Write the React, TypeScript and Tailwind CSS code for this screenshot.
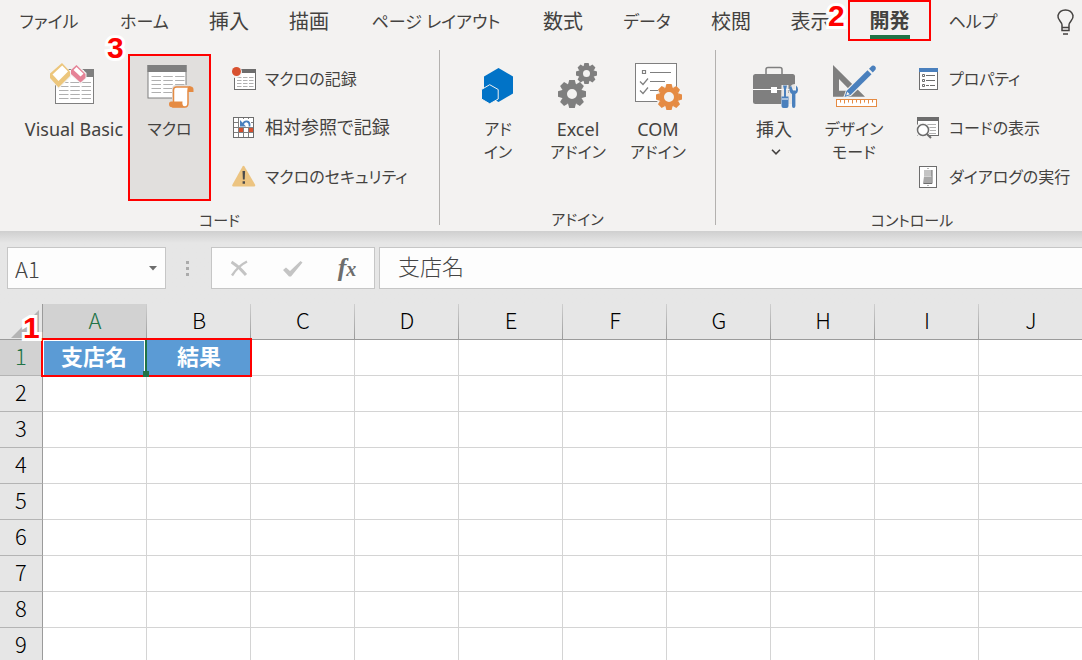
import type { ReactNode } from "react";

const TABS = [
	{ label: "ファイル", width: "w-[98px]", kana: true },
	{ label: "ホーム", width: "w-[93px]", kana: true },
	{ label: "挿入", width: "w-[76px]" },
	{ label: "描画", width: "w-[84px]" },
	{ label: "ページ レイアウト", width: "w-[170px]", kana: true },
	{ label: "数式", width: "w-[84px]" },
	{ label: "データ", width: "w-[84px]", kana: true },
	{ label: "校閲", width: "w-[84px]" },
	{ label: "表示", width: "w-[75px]" },
	{ label: "開発", width: "w-[83px]", active: true },
	{ label: "ヘルプ", width: "w-[84px]", kana: true },
];

const COLUMNS = ["A", "B", "C", "D", "E", "F", "G", "H", "I", "J"];
const ROWS = [1, 2, 3, 4, 5, 6, 7, 8, 9];

function Gear({
	cx,
	cy,
	r,
	hole,
	fill,
}: {
	cx: number;
	cy: number;
	r: number;
	hole: number;
	fill: string;
}) {
	const ring = (r * 0.76 + hole) / 2;
	const tooth = r * 0.2;
	return (
		<g transform={`translate(${cx} ${cy})`} fill={fill}>
			<circle
				r={ring}
				fill="none"
				stroke={fill}
				strokeWidth={r * 0.76 - hole}
			/>
			{[0, 45, 90, 135, 180, 225, 270, 315].map((a) => (
				<path
					key={a}
					transform={`rotate(${a})`}
					d={`M${-tooth * 1.4} ${-r * 0.7}L${-tooth} ${-r}H${tooth}L${tooth * 1.4} ${-r * 0.7}Z`}
				/>
			))}
		</g>
	);
}

function LargeIcon({ children }: { children: ReactNode }) {
	return (
		<svg viewBox="0 0 48 48" className="size-12 shrink-0" aria-hidden="true">
			{children}
		</svg>
	);
}

function SmallIcon({ children }: { children: ReactNode }) {
	return (
		<svg viewBox="0 0 24 24" className="size-6 shrink-0" aria-hidden="true">
			{children}
		</svg>
	);
}

function VisualBasicIcon() {
	return (
		<LargeIcon>
			<rect x="5.5" y="7.5" width="38" height="34" fill="#fff" stroke="#7f7f7f" />
			<path d="M34 7h10v8H34z" fill="#7f7f7f" />
			<path
				d="M9 20.5h32M9 24.5h32M9 28.5h32M9 32.5h32M9 36.5h32"
				stroke="#b0b0b0"
				strokeDasharray="9.5 1.8"
			/>
			<path d="M12 0.5L21 10v5L8.500 27L-0.500 16v-4.500z" fill="#f3f2f1" />
			<path d="M12 1L20 9.500V14L8.500 25.500L0 16V11.500z" fill="#ecc67c" />
			<path d="M12.200 3.500L18 9.500L8.500 19L2.500 12.500z" fill="#fff" />
			<path d="M27 2L36.500 11v5L31 22L20.500 13V8z" fill="#f3f2f1" />
			<path d="M26.500 3L35.500 12V16L30.500 20.500L21 12V8z" fill="#e58397" />
			<path d="M26.500 5L33.500 11.800L30.500 14.500L23.500 8z" fill="#fff" />
		</LargeIcon>
	);
}

function MacroIcon() {
	return (
		<LargeIcon>
			<rect x="2" y="3.500" width="38" height="32.500" fill="#fff" stroke="#7f7f7f" />
			<path d="M1.500 3h39v7h-39z" fill="#7f7f7f" />
			<path
				d="M5.500 14.500h33M5.500 18.500h33M5.500 22.500h33M5.500 26.500h33M5.500 30.500h33"
				stroke="#b0b0b0"
				strokeDasharray="9.500 2.300"
			/>
			<path d="M26 39V27q0-4 4-4h15q4 0 4 4v4h-4v9q0 7-6 7H25q-3-1-3-4t4-4z" fill="#e1dfdd" />
			<path d="M27.500 40V28q0-3 3-3H43q-1 1-1 4v12q0 4-3 4H27z" fill="#fff" stroke="#e58b43" strokeWidth="1.500" />
			<path d="M43 24.300q4.500 0 4.500 3.200V30H42v-2.500q0-2 1-3.200z" fill="#e58b43" />
			<path d="M25.500 39.500h11q-.8 4 2.500 5.800H26q-3 0-3-3t2.500-2.800z" fill="#e58b43" />
		</LargeIcon>
	);
}

function AddInIcon() {
	return (
		<LargeIcon>
			<path d="M24.500 6L39 14.500v17L24.500 40L10 31.500v-17z" fill="#0173c7" />
			<path
				d="M15.700 22.700L24.200 27.500v9.500l-8.500 4.800L7.500 37v-9.500z"
				fill="#0173c7"
				stroke="#f3f2f1"
				strokeWidth="1"
			/>
		</LargeIcon>
	);
}

function ExcelAddInIcon() {
	return (
		<LargeIcon>
			<Gear cx={32.5} cy={11.5} r={10.5} hole={3.5} fill="#7f7f7f" />
			<Gear cx={18} cy={32} r={14} hole={5} fill="#7f7f7f" />
		</LargeIcon>
	);
}

function ComAddInIcon() {
	return (
		<LargeIcon>
			<rect x="1.500" y="1.500" width="41" height="38" fill="#fff" stroke="#7f7f7f" />
			<path
				d="M8.500 8.500h3v3h-3zM16 10.500h21M16 19.500h15M16 28.500h8M6 19.500l3 3 5-6M6 28.500l3 3 5-6"
				fill="none"
				stroke="#7f7f7f"
				strokeWidth="1.200"
			/>
			<circle cx="35" cy="35" r="12.500" fill="#f3f2f1" />
			<Gear cx={35} cy={35} r={13} hole={5} fill="#e58b43" />
		</LargeIcon>
	);
}

function ToolboxIcon() {
	return (
		<LargeIcon>
			<path d="M16 12V7.500q0-2 2-2h12q2 0 2 2V12" fill="none" stroke="#7f7f7f" strokeWidth="1.500" />
			<rect x="3" y="12" width="42" height="30" rx="2.500" fill="#7f7f7f" />
			<path d="M3 27.500h42" stroke="#fff" />
			<path d="M21 25h6v6h-6z" fill="#fff" />
			<path d="M31.500 23h7v8l2-7q4-4 8 0v18H31z" fill="#f3f2f1" opacity=".9" />
			<path
				d="M33 23.500h4l-1 4v7h2.500v9.500q0 2-2 2h-3q-2 0-2-2v-9.500H34v-7z"
				fill="#4a80bd"
			/>
			<path d="M32 37h6" stroke="#fff" />
			<path
				d="M41 23.500q-2 2-1.500 5 .5 2.500 2.500 3.500v12q0 2 1.700 2t1.700-2V32q2.600-1 2.600-4.500 0-2.500-2-4v5h-3z"
				fill="#4a80bd"
			/>
		</LargeIcon>
	);
}

function DesignIcon() {
	return (
		<LargeIcon>
			<path d="M3 3L35 34.700H3zM9 17v11.700h11.500z" fill="#7f7f7f" fillRule="evenodd" />
			<path d="M13 36l3-8L42 2l6 6L21 34z" fill="#f3f2f1" />
			<path d="M14.500 35l2-6L37.500 8.200l4 4L20.500 33z" fill="#4a80bd" />
			<path d="M39 6.700L42 3.800q1.500-1 3 .4t.6 3.400L42.800 10.500z" fill="#4a80bd" />
			<path d="M17.300 29.800l2.500 2.500-3.600 1.200z" fill="#f3f2f1" />
			<rect x="6.500" y="37.500" width="40" height="7" fill="#fff" stroke="#e58b43" />
			<path
				d="M10.500 38v2.500M14.500 38v3.500M18.500 38v2.500M22.500 38v3.500M26.500 38v2.500M30.500 38v3.500M34.500 38v2.500M38.500 38v3.500M42.500 38v2.500"
				stroke="#e58b43"
			/>
		</LargeIcon>
	);
}

function RecordIcon() {
	return (
		<SmallIcon>
			<rect x="2.500" y="3.500" width="21" height="19" fill="#fff" stroke="#6d6d6d" />
			<path d="M2 2h22v4H2z" fill="#6d6d6d" />
			<path
				d="M5 10.500h16.500M5 13.500h16.500M5 16.500h16.500M5 19.500h16.500"
				stroke="#b0b0b0"
				strokeDasharray="4.500 1.500"
			/>
			<circle cx="4" cy="5" r="6" fill="#f3f2f1" />
			<circle cx="4.500" cy="4.500" r="4.500" fill="#d8512f" />
		</SmallIcon>
	);
}

function RelativeRefIcon() {
	return (
		<SmallIcon>
			<rect x="1.500" y="1.500" width="20" height="20" fill="#fff" />
			<path d="M6.500 1v21M11.500 1v21M16.500 1v21M1 6.500h21M1 11.500h21M1 16.500h21" stroke="#7f7f7f" />
			<path d="M7 12h4v4H7zM17 12h4v4h-4z" fill="#d8512f" />
			<path d="M7 3h12v8H7z" fill="#fff" />
			<path d="M10.500 9Q12 5 15 5.500T17.500 10.500" fill="none" stroke="#4a80bd" strokeWidth="1.800" />
			<path d="M8 4v6.500h6z" fill="#4a80bd" />
			<rect x="1.500" y="1.500" width="20" height="20" fill="none" stroke="#6d6d6d" />
		</SmallIcon>
	);
}

function WarningIcon() {
	return (
		<SmallIcon>
			<path d="M10.500 1.500q1-1.500 2 0L23 19.500q.8 2-1 2H1.500q-2 0-1-2z" fill="#ecc481" />
			<path d="M10.500 6h2.600l-.4 8.500h-1.800zM10.600 16.300h2.400v2.500h-2.400z" fill="#4b4b4b" />
		</SmallIcon>
	);
}

function PropertiesIcon() {
	return (
		<SmallIcon>
			<rect x="3.500" y="1.500" width="18" height="21" fill="#fff" stroke="#6d6d6d" />
			<path d="M3 1h19v4H3z" fill="#4a80bd" />
			<path d="M10 8.500h9M10 13.500h9M10 18.500h3M14 18.500h5" stroke="#6d6d6d" />
			<path d="M6.500 7.500h2v2h-2zM6.500 12.500h2v2h-2zM6.500 17.500h2v2h-2z" fill="none" stroke="#6d6d6d" />
		</SmallIcon>
	);
}

function ViewCodeIcon() {
	return (
		<SmallIcon>
			<rect x="1.500" y="2.500" width="21" height="17" fill="#fff" stroke="#6d6d6d" />
			<path d="M1 1h22v4H1z" fill="#6d6d6d" />
			<path d="M11 8.500h9M13 11.500h7M13 14.500h7M13 17.500h7" stroke="#b0b0b0" />
			<circle cx="6.500" cy="14" r="7.500" fill="#f3f2f1" />
			<circle cx="7" cy="14" r="5.500" fill="#fff" stroke="#6d6d6d" strokeWidth="1.500" />
			<path d="M11 18l4 4" stroke="#6d6d6d" strokeWidth="2" />
		</SmallIcon>
	);
}

function RunDialogIcon() {
	return (
		<SmallIcon>
			<rect x="3.500" y="1.500" width="17" height="21" fill="#fff" stroke="#6d6d6d" />
			<path d="M8 5h8v6H8z" fill="#c4c4c4" />
			<path d="M8 11.500h7.500v7H7z" fill="#a8a8a8" />
			<path d="M16 5v13.500H7.500" fill="none" stroke="#6d6d6d" />
			<path d="M11.500 3h1v1h-1zM11.500 20h1v1h-1z" fill="#6d6d6d" />
		</SmallIcon>
	);
}

function LargeButton({
	icon,
	children,
	className = "w-20 pt-2",
}: {
	icon: ReactNode;
	children: ReactNode;
	className?: string;
}) {
	return (
		<button
			type="button"
			className={`flex shrink-0 flex-col items-center whitespace-nowrap ${className}`}
		>
			{icon}
			<span className="mt-2 flex flex-col items-center text-[16px] leading-[23px]">
				{children}
			</span>
		</button>
	);
}

function SmallButton({
	icon,
	label,
	size = "text-[16px]",
}: {
	icon: ReactNode;
	label: string;
	size?: string;
}) {
	return (
		<button
			type="button"
			className={`flex h-[49px] items-center gap-[9px] whitespace-nowrap ${size}`}
		>
			{icon}
			<span>{label}</span>
		</button>
	);
}

function Group({
	label,
	className,
	children,
}: {
	label: string;
	className: string;
	children: ReactNode;
}) {
	return (
		<section className={`flex shrink-0 flex-col ${className}`} aria-label={label}>
			<div className="flex h-[147px]">{children}</div>
			<h2 className="mt-[7px] text-center text-[15px] leading-6">{label}</h2>
		</section>
	);
}

function Divider() {
	return <div className="-mt-1 h-[175px] w-px shrink-0 bg-[#b3b1af]" />;
}

function Callout({ n, className }: { n: number; className: string }) {
	return (
		<span
			className={`pointer-events-none absolute z-20 font-['Liberation_Sans',sans-serif] text-[30px] leading-8 font-bold text-[#ff0000] [-webkit-text-stroke:6px_white] [paint-order:stroke_fill] ${className}`}
		>
			{n}
		</span>
	);
}

function Ribbon() {
	return (
		<header className="relative shrink-0 bg-[#f3f2f1] font-['Noto_Sans','Noto_Sans_CJK_JP',sans-serif] text-[18px] text-[#444240] [font-feature-settings:'palt']">
			<nav className="flex h-[41px] items-stretch overflow-hidden" aria-label="リボン">
				{TABS.map((tab) =>
					tab.active ? (
						<button
							key={tab.label}
							type="button"
							className={`flex shrink-0 flex-col items-center border-2 border-[#ff0000] text-[20px] font-bold ${tab.width}`}
						>
							<span className="flex h-[37px] items-center border-b-4 border-[#217346] pt-1">
								{tab.label}
							</span>
						</button>
					) : (
						<button
							key={tab.label}
							type="button"
							className={`shrink-0 pt-0.5 whitespace-nowrap ${tab.kana ? "text-[17px]" : "text-[20px]"} ${tab.width}`}
						>
							{tab.label}
						</button>
					),
				)}
				<button type="button" className="ml-auto w-[34px] shrink-0" aria-label="操作アシスト">
					<svg viewBox="0 0 20 26" className="mt-0.5 ml-2 h-[26px] w-5" fill="none" stroke="#444240" strokeWidth="1.500">
						<path d="M6 18.500v-2.500q0-1.500-2-4Q1.500 9 2 6.500 3.500 1 9.500 1T17 6.500q.5 2.500-2 5.500-2 2.500-2 4v2.500zM6 18v3.500h7V18M7 25h5" />
					</svg>
				</button>
			</nav>

			<div className="flex h-[190px] overflow-hidden pt-[13px]">
				<Group label="コード" className="w-[439px]">
					<LargeButton icon={<VisualBasicIcon />} className="ml-5 w-[108px] pt-2">
						<span className="text-[18px]">Visual Basic</span>
					</LargeButton>
					<LargeButton
						icon={<MacroIcon />}
						className="w-[83px] border-2 border-[#ff0000] bg-[#e1dfdd] pt-1.5"
					>
						<span>マクロ</span>
					</LargeButton>
					<div className="ml-[21px] flex flex-col">
						<SmallButton icon={<RecordIcon />} label="マクロの記録" />
						<SmallButton icon={<RelativeRefIcon />} label="相対参照で記録" size="text-[18px]" />
						<SmallButton icon={<WarningIcon />} label="マクロのセキュリティ" />
					</div>
				</Group>
				<Divider />
				<Group label="アドイン" className="w-[275px]">
					<LargeButton icon={<AddInIcon />} className="ml-[18px] w-20 pt-2">
						<span>アド</span>
						<span>イン</span>
					</LargeButton>
					<LargeButton icon={<ExcelAddInIcon />}>
						<span className="text-[18px]">Excel</span>
						<span>アドイン</span>
					</LargeButton>
					<LargeButton icon={<ComAddInIcon />}>
						<span className="text-[18px]">COM</span>
						<span>アドイン</span>
					</LargeButton>
				</Group>
				<Divider />
				<Group label="コントロール" className="w-[392px]">
					<LargeButton icon={<ToolboxIcon />} className="ml-[18px] w-20 pt-2">
						<span className="text-[18px]">挿入</span>
						<svg viewBox="0 0 10 6" className="mt-2 ml-1 h-1.5 w-2.5" fill="none" stroke="#444240" strokeWidth="1.600">
							<path d="M1 0.800l4 4 4-4" />
						</svg>
					</LargeButton>
					<LargeButton icon={<DesignIcon />}>
						<span>デザイン</span>
						<span>モード</span>
					</LargeButton>
					<div className="ml-[22px] flex flex-col">
						<SmallButton icon={<PropertiesIcon />} label="プロパティ" />
						<SmallButton icon={<ViewCodeIcon />} label="コードの表示" />
						<SmallButton icon={<RunDialogIcon />} label="ダイアログの実行" />
					</div>
				</Group>
			</div>
			<Callout n={3} className="top-8 left-[107px]" />
			<Callout n={2} className="top-0 left-[828px]" />
		</header>
	);
}

function FormulaBar() {
	return (
		<div className="flex shrink-0 bg-linear-to-b from-[#cfcfcf] to-[#e6e6e6] to-[12px] pt-4 pb-[15px] pl-[7px] text-[22px] text-[#444]">
			<div className="flex h-[42px] w-[159px] shrink-0 items-center border border-[#c6c6c6] bg-[#fdfdfd] pr-2">
				<input
					aria-label="名前ボックス"
					defaultValue="A1"
					className="w-full min-w-0 bg-transparent pl-[7px] font-light outline-none"
				/>
				<svg viewBox="0 0 8 5" className="h-[5px] w-2 shrink-0" fill="#6d6d6d">
					<path d="M0 0h8L4 4.500z" />
				</svg>
			</div>
			<div className="flex w-[45px] shrink-0 flex-col items-center justify-center gap-[3px] pr-0.5">
				<span className="size-[3px] bg-[#ababab]" />
				<span className="size-[3px] bg-[#ababab]" />
				<span className="size-[3px] bg-[#ababab]" />
			</div>
			<div className="flex h-[42px] w-[164px] shrink-0 items-center border border-[#c6c6c6] bg-[#fdfdfd]">
				<button type="button" className="flex flex-1 justify-center" aria-label="キャンセル">
					<svg viewBox="0 0 18 17" className="h-[17px] w-[18px]" fill="none" stroke="#c4c4c4">
						<path d="M1.500 2q8 5 14.500 13" strokeWidth="2.800" />
						<path d="M17 1.500Q8 6 2 15.500" strokeWidth="2.400" />
					</svg>
				</button>
				<button type="button" className="flex flex-1 justify-center" aria-label="入力">
					<svg viewBox="0 0 20 17" className="h-[17px] w-5" fill="#c4c4c4">
						<path d="M0 10l3-2.500 4 3.500L17.500 1l2 1.500L8 16.500H6z" />
					</svg>
				</button>
				<button
					type="button"
					aria-label="関数の挿入"
					className="flex-1 font-['Liberation_Serif',serif] text-[26px] leading-9 font-bold text-[#6d6d6d] italic"
				>
					f<span className="text-[20px]">x</span>
				</button>
			</div>
			<input
				aria-label="数式バー"
				defaultValue="支店名"
				className="ml-1 h-[42px] min-w-0 flex-1 border border-r-0 border-[#c6c6c6] bg-[#fdfdfd] pb-1.5 pl-[18px] font-light outline-none"
			/>
		</div>
	);
}

function Sheet() {
	return (
		<main className="relative min-h-0 flex-1 overflow-hidden bg-white">
			<table className="w-[1083px] table-fixed border-separate border-spacing-0 text-center text-[22px] leading-7">
				<colgroup>
					<col className="w-[43px]" />
					{COLUMNS.map((c) => (
						<col key={c} className="w-[104px]" />
					))}
				</colgroup>
				<thead>
					<tr className="h-9 bg-[#e6e6e6]">
						<th className="border-r border-b border-[#9b9b9b] p-0" aria-label="すべて選択">
							<svg viewBox="0 0 28 28" className="mt-1 ml-[11px] size-7" fill="#b4b4b4">
								<path d="M28 0v28H0z" />
							</svg>
						</th>
						{COLUMNS.map((c) => (
							<th
								key={c}
								scope="col"
								className={`border-b border-[#9b9b9b] bg-[linear-gradient(#cfcfcf,#9b9b9b)] bg-[length:1px_100%] bg-right bg-no-repeat p-0 pb-1.5 font-light ${
									c === "A" ? "bg-[#d2d2d2] text-[#217346]" : "text-black"
								}`}
							>
								{c}
							</th>
						))}
					</tr>
				</thead>
				<tbody>
					{ROWS.map((r) => (
						<tr key={r} className="h-9">
							<th
								scope="row"
								className={`border-r border-b border-r-[#9b9b9b] border-b-[#b4b4b4] p-0 pb-1.5 font-light ${
									r === 1 ? "bg-[#d2d2d2] text-[#217346]" : "bg-[#e6e6e6] text-black"
								}`}
							>
								{r}
							</th>
							{COLUMNS.map((c) => {
								if (r === 1 && c === "A") {
									return (
										<td key={c} className="relative border-r-2 border-[#217346] bg-[#5b9bd5] p-0 font-bold text-white">
											<div className="h-9 border border-white pb-1.5">支店名</div>
											<span className="absolute -right-1 -bottom-px z-20 size-1.5 bg-[#217346]" />
										</td>
									);
								}
								if (r === 1 && c === "B") {
									return (
										<td key={c} className="bg-[#5b9bd5] p-0 pb-1.5 font-bold text-white">
											結果
										</td>
									);
								}
								return <td key={c} className="border-r border-b border-[#d4d4d4] p-0" />;
							})}
						</tr>
					))}
				</tbody>
			</table>
			<div className="pointer-events-none absolute top-[34px] left-[41px] z-10 h-[39px] w-[211px] border-2 border-[#ff0000]" />
			<Callout n={1} className="top-2 left-[23px]" />
		</main>
	);
}

export default function App() {
	return (
		<div className="flex h-screen flex-col overflow-hidden bg-white font-['Noto_Sans_CJK_JP',sans-serif]">
			<Ribbon />
			<FormulaBar />
			<Sheet />
		</div>
	);
}
